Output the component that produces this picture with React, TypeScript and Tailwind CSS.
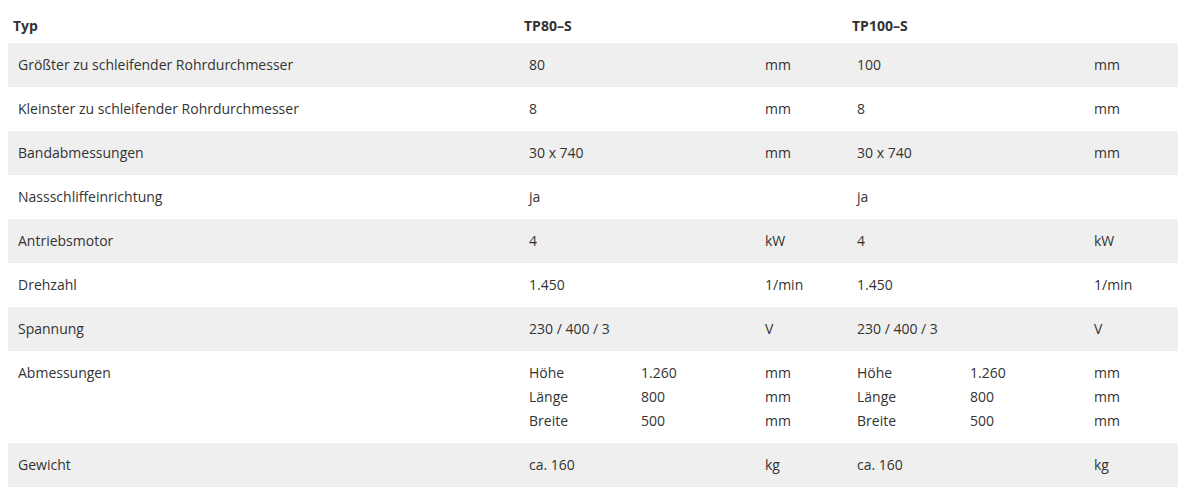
import React from 'react';

type Row = {
  label: string;
  a: string;
  aUnit: string;
  b: string;
  bUnit: string;
};

const rows: Row[] = [
  { label: 'Größter zu schleifender Rohrdurchmesser', a: '80', aUnit: 'mm', b: '100', bUnit: 'mm' },
  { label: 'Kleinster zu schleifender Rohrdurchmesser', a: '8', aUnit: 'mm', b: '8', bUnit: 'mm' },
  { label: 'Bandabmessungen', a: '30 x 740', aUnit: 'mm', b: '30 x 740', bUnit: 'mm' },
  { label: 'Nassschliffeinrichtung', a: 'ja', aUnit: '', b: 'ja', bUnit: '' },
  { label: 'Antriebsmotor', a: '4', aUnit: 'kW', b: '4', bUnit: 'kW' },
  { label: 'Drehzahl', a: '1.450', aUnit: '1/min', b: '1.450', bUnit: '1/min' },
  { label: 'Spannung', a: '230 / 400 / 3', aUnit: 'V', b: '230 / 400 / 3', bUnit: 'V' },
];

const dims = [
  ['Höhe', '1.260', 'mm'],
  ['Länge', '800', 'mm'],
  ['Breite', '500', 'mm'],
];

const cell = 'px-[10px] py-[10px] align-top';

export default function App() {
  return (
    <div
      className="bg-white px-2 text-[14px] leading-[24px] text-[#333333]"
      style={{ fontFamily: '"Open Sans", "Liberation Sans", sans-serif' }}
    >
      <table className="w-[1170px] table-fixed border-collapse">
        <colgroup>
          <col className="w-[511px]" />
          <col className="w-[112px]" />
          <col className="w-[124px]" />
          <col className="w-[92px]" />
          <col className="w-[113px]" />
          <col className="w-[124px]" />
          <col className="w-[94px]" />
        </colgroup>
        <thead>
          <tr className="h-[43px]">
            <th className="px-[5px] pt-[14px] pb-[5px] text-left font-bold">Typ</th>
            <th colSpan={3} className="px-[5px] pt-[14px] pb-[5px] text-left font-bold">TP80–S</th>
            <th colSpan={3} className="px-[5px] pt-[14px] pb-[5px] text-left font-bold">TP100–S</th>
          </tr>
        </thead>
        <tbody>
          {rows.map((r, i) => (
            <tr key={r.label} className={i % 2 === 0 ? 'bg-[#efefef]' : 'bg-white'}>
              <td className={cell}>{r.label}</td>
              <td colSpan={2} className={cell}>{r.a}</td>
              <td className={cell}>{r.aUnit}</td>
              <td colSpan={2} className={cell}>{r.b}</td>
              <td className={cell}>{r.bUnit}</td>
            </tr>
          ))}
          <tr className="bg-white">
            <td className={cell}>Abmessungen</td>
            {[0, 1].map((k) =>
              [0, 1, 2].map((c) => (
                <td key={`${k}-${c}`} className={cell}>
                  {dims.map((d) => (
                    <div key={d[0]}>{d[c]}</div>
                  ))}
                </td>
              ))
            )}
          </tr>
          <tr className="bg-[#efefef]">
            <td className={cell}>Gewicht</td>
            <td colSpan={2} className={cell}>ca. 160</td>
            <td className={cell}>kg</td>
            <td colSpan={2} className={cell}>ca. 160</td>
            <td className={cell}>kg</td>
          </tr>
        </tbody>
      </table>
    </div>
  );
}
